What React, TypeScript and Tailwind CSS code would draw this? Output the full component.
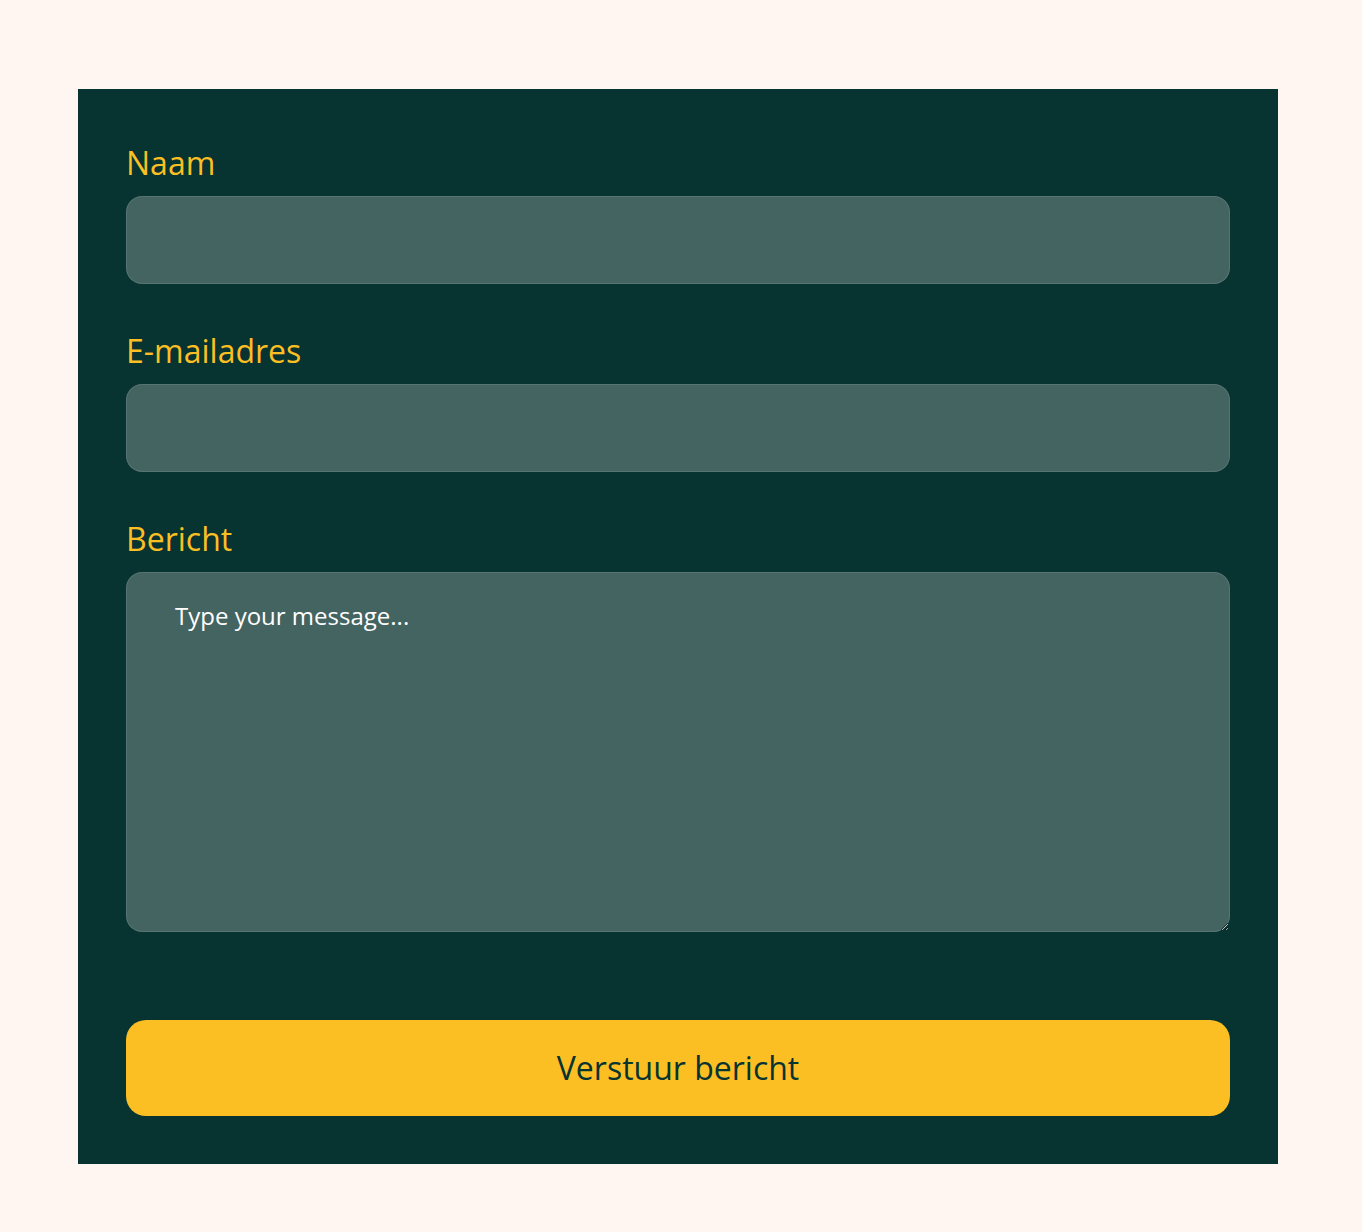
import React, { useState } from 'react';

const labelCls = 'block text-[32px] leading-[51px] text-[#fbbf24] mb-[8px]';
const fieldCls =
  'block w-full h-[88px] rounded-2xl border border-white/10 bg-[#446462] px-12 text-[24px] text-white outline-none';

export default function App() {
  const [name, setName] = useState('');
  const [email, setEmail] = useState('');
  const [message, setMessage] = useState('');

  return (
    <div
      className="min-h-screen bg-[#fff6f1] pt-[89px] pb-[68px]"
      style={{ fontFamily: '"Open Sans", "Noto Sans", sans-serif' }}
    >
      <form
        className="ml-[78px] w-[1200px] bg-[#073331] px-12 pt-12 pb-12"
        onSubmit={(e) => e.preventDefault()}
      >
        <div className="mb-[41px]">
          <label htmlFor="naam" className={labelCls}>
            Naam
          </label>
          <input id="naam" type="text" value={name} onChange={(e) => setName(e.target.value)} className={fieldCls} />
        </div>

        <div className="mb-[41px]">
          <label htmlFor="email" className={labelCls}>
            E-mailadres
          </label>
          <input id="email" type="email" value={email} onChange={(e) => setEmail(e.target.value)} className={fieldCls} />
        </div>

        <div className="mb-[88px]">
          <label htmlFor="bericht" className={labelCls}>
            Bericht
          </label>
          <textarea
            id="bericht"
            value={message}
            onChange={(e) => setMessage(e.target.value)}
            placeholder="Type your message..."
            className="block w-full h-[360px] rounded-2xl border border-white/10 bg-[#446462] px-12 pt-[25px] pb-6 text-[24px] leading-[36px] text-white placeholder:text-white outline-none"
          />
        </div>

        <button
          type="submit"
          className="block w-full h-[96px] rounded-[20px] bg-[#fbbf24] text-[32px] text-[#073331]"
        >
          Verstuur bericht
        </button>
      </form>
    </div>
  );
}
